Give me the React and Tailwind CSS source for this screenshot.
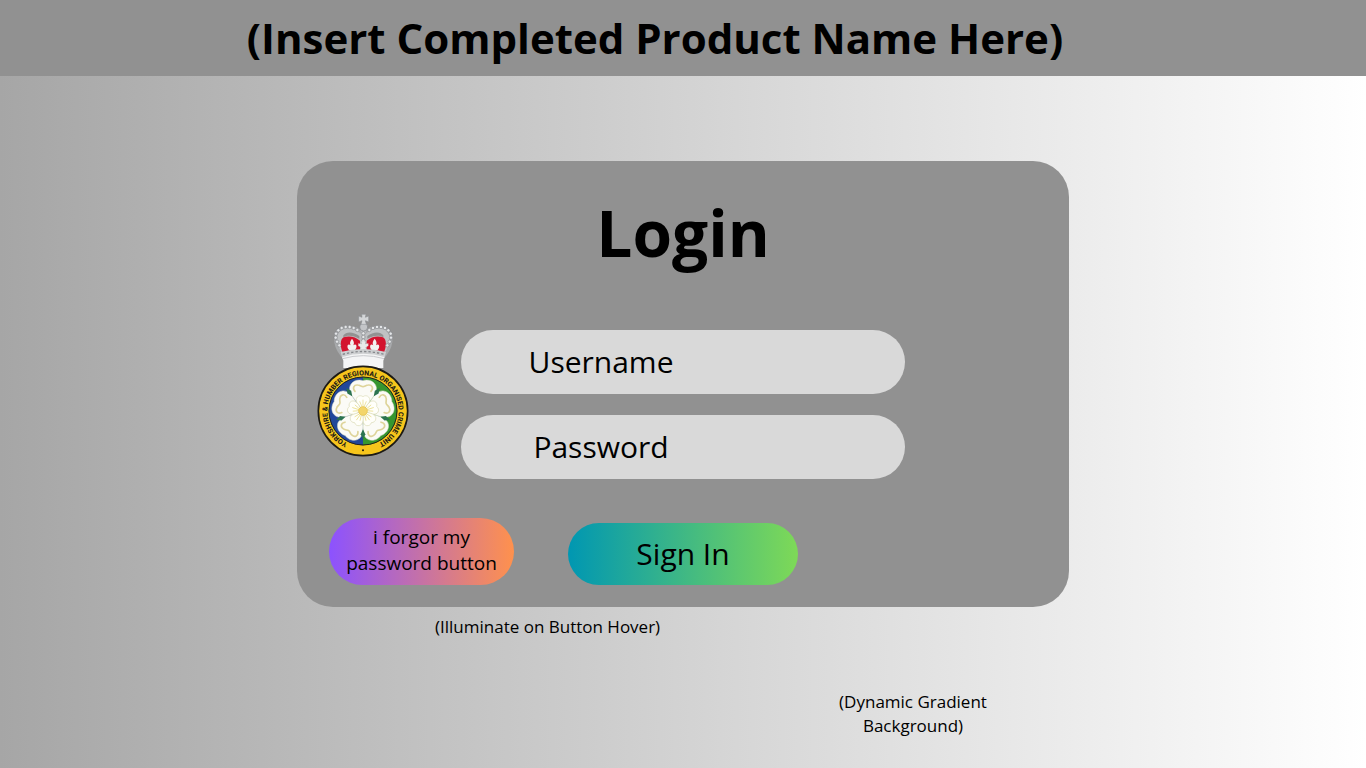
const PETALS = [0, 72, 144, 216, 288];

const CROWN_BEADS = [
  [94, 112], [87, 101], [83, 89], [84, 77], [91, 67], [101, 60], [113, 57], [125, 57], [137, 60], [148, 66],
  [184, 66], [195, 60], [207, 57], [219, 57], [231, 60], [241, 67], [248, 77], [249, 89], [245, 101], [238, 112],
];

function Crest() {
  return (
    <svg
      viewBox="0 0 336 456"
      className="h-[152px] w-28 shrink-0"
      role="img"
      aria-label="Yorkshire &amp; Humber Regional Organised Crime Unit crest"
    >
      <defs>
        <path id="ring" d="M 165 416 A 107 107 0 0 1 165 202 A 107 107 0 0 1 165 416" />
      </defs>

      {/* crown */}
      <path
        d="M102 142 C74 106 76 60 116 58 C140 57 156 66 166 80 C176 66 192 57 216 58 C256 60 258 106 230 142 Z"
        fill="#bfc1c3"
        stroke="#a8aaac"
        strokeWidth="9"
      />
      <path d="M106 82 C114 70 136 70 154 84 L154 92 C136 82 118 80 106 88 Z" fill="#929292" />
      <path d="M226 82 C218 70 196 70 178 84 L178 92 C196 82 214 80 226 88 Z" fill="#929292" />
      <path d="M104 134 C96 114 96 94 107 88 C124 82 143 87 156 98 L156 128 Q126 124 104 134 Z" fill="#d3142f" />
      <path d="M228 134 C236 114 236 94 225 88 C208 82 189 87 176 98 L176 128 Q206 124 228 134 Z" fill="#d3142f" />
      {CROWN_BEADS.map(([x, y]) => (
        <circle key={`${x}-${y}`} cx={x} cy={y} r="5" fill="#e3e5e7" stroke="#74777b" strokeWidth="1.5" />
      ))}
      <path d="M158 66 H174 L172 128 H160 Z" fill="#b9bbbe" />
      {[76, 87, 98, 109].map((y) => (
        <circle key={y} cx="166" cy={y} r="5" fill="#e6e7e8" stroke="#74777b" strokeWidth="1.5" />
      ))}
      <circle cx="167" cy="57" r="12" fill="#c3c5c8" stroke="#85888c" strokeWidth="2" />
      <path
        d="M161 19 H174 L172 28 L182 24 V42 L172 38 L175 49 H159 L162 38 L152 42 V24 L162 28 Z"
        fill="#d3d5d7"
        stroke="#85888c"
        strokeWidth="1.5"
      />
      {[132, 200].map((x) => (
        <path
          key={x}
          d={`M${x} 92 C${x + 8} 102 ${x + 6} 107 ${x + 4} 112 C${x + 14} 104 ${x + 17} 118 ${x + 9} 126 H${x - 9} C${x - 17} 118 ${x - 14} 104 ${x - 4} 112 C${x - 6} 107 ${x - 8} 102 ${x} 92 Z`}
          fill="#f2f2f2"
        />
      ))}
      <path d="M156 128 L160 118 L151 114 V106 L161 109 L160 100 H172 L171 109 L181 106 V114 L172 118 L176 128 Z" fill="#e8e9ea" />
      <path d="M98 132 Q166 114 234 132 L230 148 Q166 130 102 148 Z" fill="#cdcfd1" />
      <path d="M104 139 Q166 122 228 139" fill="none" stroke="#85888c" strokeWidth="4" strokeDasharray="7 6" />
      <path d="M102 147 Q166 128 230 147 L226 158 V180 H106 V158 Z" fill="#f4f5f6" />
      <path d="M104 152 Q166 134 228 152" fill="none" stroke="#c8cacd" strokeWidth="3" />

      {/* ring and field */}
      <circle cx="165" cy="309" r="134" fill="#f6c51c" stroke="#1c1a14" strokeWidth="5" />
      <path d="M165 206 A103 103 0 0 0 165 412 Z" fill="#21479a" />
      <path d="M165 206 A103 103 0 0 1 165 412 Z" fill="#36962f" />
      <circle cx="165" cy="309" r="102" fill="none" stroke="#26241c" strokeWidth="3" />
      <text fill="#1c1a14" fontFamily="Roboto, sans-serif" fontWeight="800" fontSize="21">
        <textPath href="#ring" startOffset="50%" textAnchor="middle">
          YORKSHIRE &amp; HUMBER REGIONAL ORGANISED CRIME UNIT
        </textPath>
      </text>
      <circle cx="165" cy="427" r="3" fill="#1c1a14" />

      {/* rose */}
      {PETALS.map((a) => (
        <g key={a} transform={`rotate(${a} 165 309)`}>
          <path
            d="M165 300 C138 276 116 248 128 230 C136 216 154 214 165 218 C176 214 194 216 202 230 C214 248 192 276 165 300 Z"
            fill="#fbfbf6"
            stroke="#d9dccb"
            strokeWidth="1.5"
          />
          <path
            d="M141 250 C132 240 138 230 149 231 C156 231 160 236 165 236 C170 236 174 231 181 231 C192 230 198 240 189 250"
            fill="none"
            stroke="#ded49a"
            strokeWidth="5"
            strokeLinecap="round"
          />
        </g>
      ))}
      {PETALS.map((a) => (
        <path
          key={a}
          transform={`rotate(${a + 36} 165 309)`}
          d="M165 224 L172 239 L165 254 L158 239 Z"
          fill="#2b7350"
        />
      ))}
      {PETALS.map((a) => (
        <g key={a} transform={`rotate(${a} 165 309)`}>
          <path
            d="M165 304 C148 292 140 276 148 267 C153 262 160 262 165 266 C170 262 177 262 182 267 C190 276 182 292 165 304 Z"
            fill="#fffffa"
            stroke="#dcdcb8"
            strokeWidth="2"
          />
          <path d="M165 300 V275 M165 304 L155 280 M165 304 L175 280" stroke="#eadf94" strokeWidth="2.5" />
        </g>
      ))}
      <circle cx="165" cy="309" r="13" fill="#f3d56a" stroke="#e6bf45" strokeWidth="2" />
    </svg>
  );
}

function Field({ name, label, type }) {
  return (
    <input
      name={name}
      type={type}
      aria-label={label}
      placeholder={label}
      className="h-16 w-full rounded-full bg-[#d9d9d9] pr-[164px] pb-0.5 text-center text-[30px] text-black outline-none placeholder:text-black placeholder:opacity-100 focus:ring-2 focus:ring-white"
    />
  );
}

export default function App() {
  return (
    <div className="flex min-h-screen flex-col bg-linear-to-r/srgb from-[#a6a6a6] to-white font-['Open_Sans',sans-serif] text-black">
      <header className="flex h-[76px] items-center justify-center bg-[#919191] pr-14">
        <h1 className="text-[42px] leading-none font-bold">(Insert Completed Product Name Here)</h1>
      </header>

      <main className="mx-auto mt-[85px] w-full max-w-[772px]">
        <form
          className="rounded-[36px] bg-[#919191] pt-8 pb-[22px]"
          onSubmit={(event) => event.preventDefault()}
        >
          <h2 className="text-center text-[64px] leading-20 font-bold">Login</h2>

          <div className="mt-[35px] grid grid-cols-[1fr_444px_1fr] items-start">
            <div className="pl-[11px]">
              <Crest />
            </div>
            <div className="flex flex-col gap-[21px] pt-[22px]">
              <Field name="username" label="Username" type="text" />
              <Field name="password" label="Password" type="password" />
            </div>
          </div>

          <div className="mt-[39px] flex items-end gap-[54px] pl-8">
            <button
              type="button"
              className="h-[67px] w-[185px] rounded-full bg-linear-to-r/srgb from-[#8c52ff] to-[#ff914d] pb-1 text-[19px] leading-[26px] hover:brightness-125"
            >
              i forgor my
              <br />
              password button
            </button>
            <button
              type="submit"
              className="h-[62px] w-[230px] rounded-full bg-linear-to-r/srgb from-[#0097b2] to-[#7ed957] pb-0.5 text-[30px] hover:brightness-125"
            >
              Sign In
            </button>
          </div>
        </form>

        <p className="mt-2 pl-[138px] text-[17px] leading-6">(Illuminate on Button Hover)</p>
        <p className="mt-[51px] ml-auto w-[312px] text-center text-[17px] leading-6">
          (Dynamic Gradient
          <br />
          Background)
        </p>
      </main>
    </div>
  );
}
